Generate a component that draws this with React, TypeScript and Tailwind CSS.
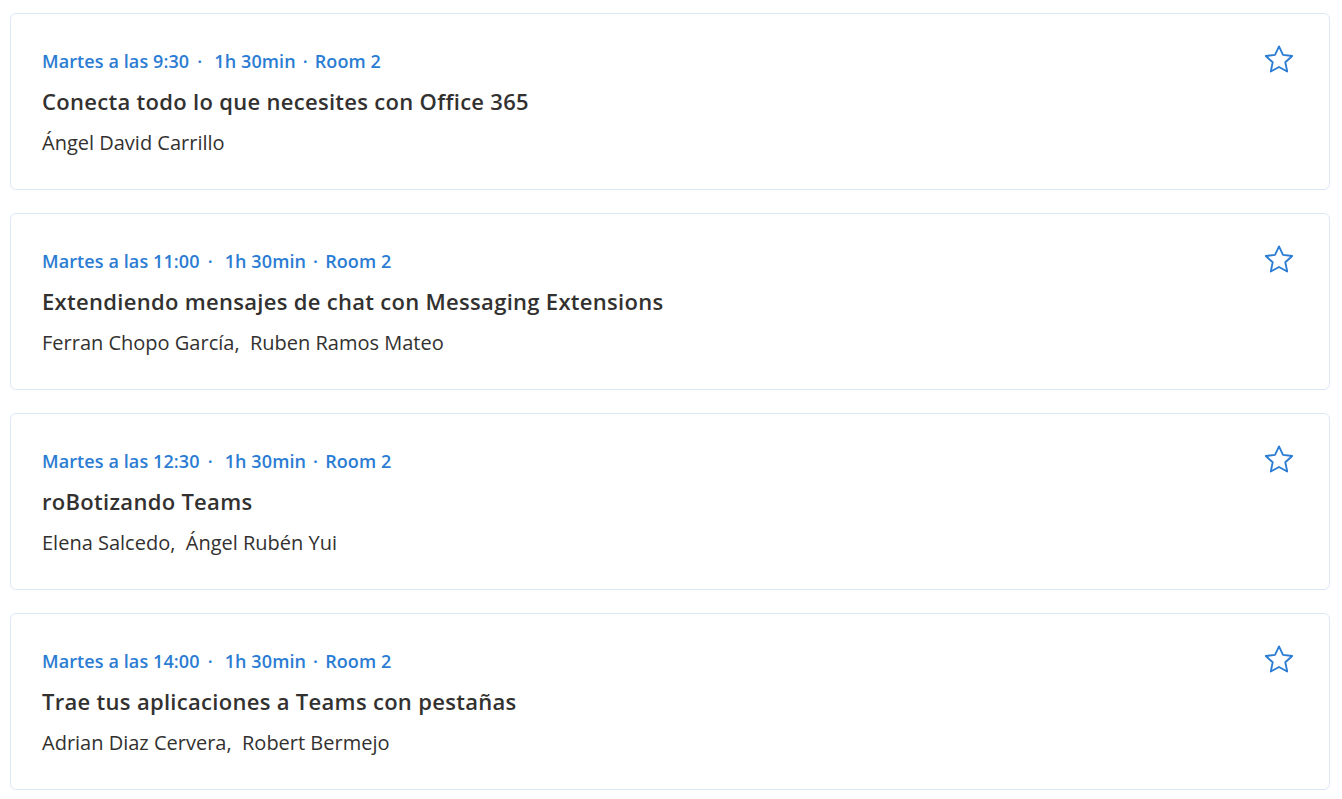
const sessions = [
  {
    time: 'Martes a las 9:30',
    title: 'Conecta todo lo que necesites con Office 365',
    speakers: ['Ángel David Carrillo'],
  },
  {
    time: 'Martes a las 11:00',
    title: 'Extendiendo mensajes de chat con Messaging Extensions',
    speakers: ['Ferran Chopo García', 'Ruben Ramos Mateo'],
  },
  {
    time: 'Martes a las 12:30',
    title: 'roBotizando Teams',
    speakers: ['Elena Salcedo', 'Ángel Rubén Yui'],
  },
  {
    time: 'Martes a las 14:00',
    title: 'Trae tus aplicaciones a Teams con pestañas',
    speakers: ['Adrian Diaz Cervera', 'Robert Bermejo'],
  },
]

function StarIcon() {
  return (
    <svg width="34" height="34" viewBox="0 0 24 24" fill="none" stroke="currentColor" strokeWidth="1.3" strokeLinejoin="round">
      <path d="M12 2.4l2.8 6 6.5.75-4.85 4.45 1.35 6.5L12 16.9l-5.8 3.2 1.35-6.5L2.7 9.15l6.5-.75z" />
    </svg>
  )
}

export default function App() {
  return (
    <div className="min-h-screen bg-white pt-[13px] pl-[10px] pr-[12px] flex flex-col gap-[23px]" style={{ fontFamily: '"Open Sans", "Noto Sans", sans-serif' }}>
      {sessions.map((s) => (
        <div key={s.time} className="h-[177px] rounded-md border border-[#dde9f6] bg-white flex justify-between pl-[31px] pr-[33px]">
          <div className="flex flex-col pt-[35px]">
            <div className="text-[18px] font-semibold text-[#2b7cd3] tracking-[0.1px] leading-[24px] whitespace-pre">
              {s.time}
              <span className="ml-[8px] mr-[12px]">·</span>
              1h 30min
              <span className="mx-[7px]">·</span>
              Room 2
            </div>
            <div className="mt-[14px] text-[22px] font-semibold text-[#323130] tracking-[0.3px] leading-[28px]">{s.title}</div>
            <div className="mt-[15px] text-[20px] text-[#323130] leading-[26px] whitespace-pre">
              {s.speakers.join(',  ')}
            </div>
          </div>
          <div className="pt-[29px] text-[#2b7cd3]">
            <StarIcon />
          </div>
        </div>
      ))}
    </div>
  )
}
